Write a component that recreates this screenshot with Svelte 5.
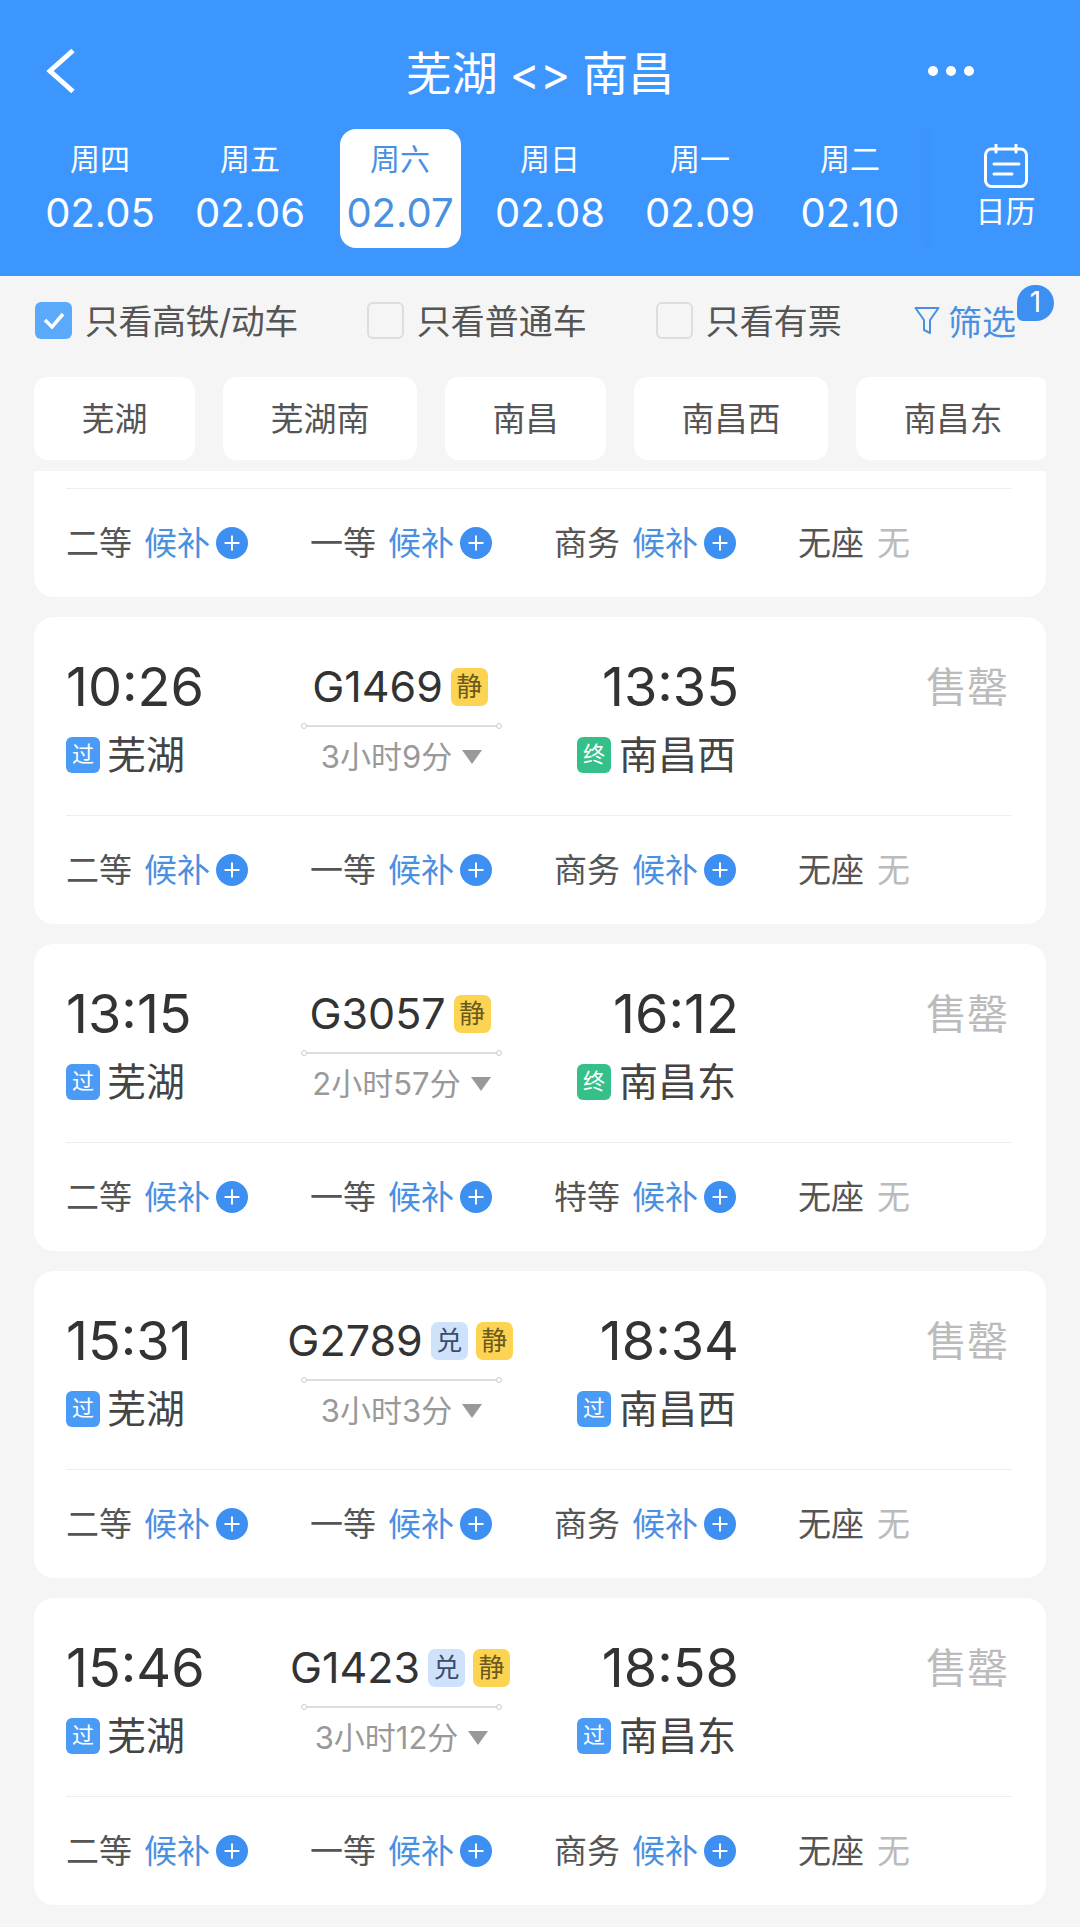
<script>
  const days = [
    { week: '周四', date: '02.05' },
    { week: '周五', date: '02.06' },
    { week: '周六', date: '02.07', active: true },
    { week: '周日', date: '02.08' },
    { week: '周一', date: '02.09' },
    { week: '周二', date: '02.10' }
  ];

  const filters = [
    { label: '只看高铁/动车', checked: true },
    { label: '只看普通车', checked: false },
    { label: '只看有票', checked: false }
  ];

  const stations = ['芜湖', '芜湖南', '南昌', '南昌西', '南昌东'];

  const standardSeats = ['二等', '一等', '商务'];

  const trains = [
    { dep: '10:26', no: 'G1469', exchange: false, dur: '3小时9分', arr: '13:35', from: '芜湖', to: '南昌西', end: true, seats: standardSeats },
    { dep: '13:15', no: 'G3057', exchange: false, dur: '2小时57分', arr: '16:12', from: '芜湖', to: '南昌东', end: true, seats: ['二等', '一等', '特等'] },
    { dep: '15:31', no: 'G2789', exchange: true, dur: '3小时3分', arr: '18:34', from: '芜湖', to: '南昌西', end: false, seats: standardSeats },
    { dep: '15:46', no: 'G1423', exchange: true, dur: '3小时12分', arr: '18:58', from: '芜湖', to: '南昌东', end: false, seats: standardSeats }
  ];
</script>

{#snippet seatRow(seats)}
  <div class="seats">
    {#each seats as seat}
      <div class="seat">
        <span class="seat-name">{seat}</span>
        <span class="wait">候补</span>
        <svg class="plus" viewBox="0 0 32 32" aria-hidden="true">
          <circle cx="16" cy="16" r="16" fill="#3d8ff2" />
          <path d="M16 8.5v15M8.5 16h15" stroke="#fff" stroke-width="2" fill="none" />
        </svg>
      </div>
    {/each}
    <div class="seat">
      <span class="seat-name">无座</span>
      <span class="none">无</span>
    </div>
  </div>
{/snippet}

<div class="page">
  <header class="header">
    <div class="title-row">
      <div class="back">
        <svg width="32" height="46" viewBox="0 0 32 46" aria-hidden="true">
          <path d="M28 2.5 5 23l23 20.500" fill="none" stroke="#fff" stroke-width="5" />
        </svg>
      </div>
      <h1 class="title">芜湖 &lt;&gt; 南昌</h1>
      <div class="more">
        <i></i><i></i><i></i>
      </div>
    </div>

    <div class="tabs">
      {#each days as day}
        <div class="tab">
          <div class="tab-box" class:active={day.active}>
            <span class="week">{day.week}</span>
            <span class="date">{day.date}</span>
          </div>
        </div>
      {/each}
      <div class="calendar">
        <svg width="44" height="44" viewBox="0 0 44 44" aria-hidden="true">
          <rect x="1.500" y="5" width="41" height="37.500" rx="6" fill="none" stroke="#fff" stroke-width="3" />
          <path d="M12 1v7M32 1v7M10 20h25M10 30h18" fill="none" stroke="#fff" stroke-width="3" stroke-linecap="round" />
        </svg>
        <span>日历</span>
      </div>
    </div>
  </header>

  <div class="filters">
    {#each filters as filter, i}
      <div class="filter">
        {#if filter.checked}
          <span class="check on">
            <svg width="26" height="22" viewBox="0 0 26 22" aria-hidden="true">
              <path d="M4 11l7 7L22 5" fill="none" stroke="#fff" stroke-width="3.500" />
            </svg>
          </span>
        {:else}
          <span class="check"></span>
        {/if}
        <span class:tight={i === 0}>{filter.label}</span>
      </div>
    {/each}
    <div class="screen">
      <svg width="26" height="29" viewBox="0 0 26 29" aria-hidden="true">
        <path d="M1.500 2h23L16 14v13l-6-3V14z" fill="none" stroke="#4a90e2" stroke-width="2" stroke-linejoin="round" />
      </svg>
      <span>筛选</span>
      <b class="count">1</b>
    </div>
  </div>

  <div class="chips">
    {#each stations as station}
      <div class="chip">{station}</div>
    {/each}
  </div>

  <div class="list">
    <section class="card partial">
      <div class="rule"></div>
      {@render seatRow(standardSeats)}
    </section>

    {#each trains as train}
      <section class="card">
        <div class="info">
          <div class="depart">
            <div class="time">{train.dep}</div>
            <div class="stop">
              <span class="tag">过</span>
              <span class="stop-name">{train.from}</span>
            </div>
          </div>

          <div class="middle">
            <div class="number">
              <span>{train.no}</span>
              {#if train.exchange}
                <span class="mark blue">兑</span>
              {/if}
              <span class="mark yellow">静</span>
            </div>
            <div class="line"></div>
            <div class="duration">
              <span class="dur-text">{train.dur}</span>
              <i class="arrow"></i>
            </div>
          </div>

          <div class="arrive">
            <div class="time">{train.arr}</div>
            <div class="stop">
              <span class="tag" class:green={train.end}>{train.end ? '终' : '过'}</span>
              <span class="stop-name">{train.to}</span>
            </div>
          </div>

          <div class="status">售罄</div>
        </div>
        {@render seatRow(train.seats)}
      </section>
    {/each}
  </div>
</div>

<style>
  :global(body) {
    margin: 0;
    background: #f5f5f5;
  }

  .page {
    width: 1080px;
    height: 1927px;
    overflow: hidden;
    background: #f5f5f5;
    font-family: Inter, "Noto Sans CJK SC", sans-serif;
    color: #555;
  }

  .header {
    height: 276px;
    background: #3d96fd;
    color: #fff;
  }

  .title-row {
    height: 129px;
    box-sizing: border-box;
    padding-top: 13px;
    display: grid;
    grid-template-columns: 1fr auto 1fr;
    align-items: center;
  }

  .back {
    padding-left: 45px;
    display: flex;
  }

  .title {
    margin: 0 0 2px;
    font-size: 46px;
    font-weight: 400;
    word-spacing: -1px;
    white-space: pre;
  }

  .more {
    display: flex;
    justify-content: flex-end;
    gap: 8px;
    padding-right: 106px;
  }

  .more i {
    width: 10px;
    height: 10px;
    border-radius: 50%;
    background: #fff;
  }

  .tabs {
    display: flex;
    height: 119px;
    padding-left: 25px;
  }

  .tab {
    width: 150px;
    display: flex;
    justify-content: center;
  }

  .tab-box {
    width: 121px;
    border-radius: 16px;
    box-sizing: border-box;
    padding-top: 11px;
    display: flex;
    flex-direction: column;
    align-items: center;
  }

  .tab-box.active {
    background: #fff;
    color: #4a90e2;
  }

  .week {
    height: 40px;
    line-height: 38px;
    font-size: 30px;
  }

  .date {
    height: 64px;
    line-height: 66px;
    font-size: 40px;
  }

  .calendar {
    margin-left: auto;
    width: 149px;
    display: flex;
    flex-direction: column;
    align-items: center;
    padding-top: 15px;
    box-sizing: border-box;
    font-size: 30px;
    box-shadow: -4px 0 6px rgba(30, 90, 190, 0.04);
    clip-path: inset(0 0 0 -12px);
  }

  .calendar span {
    margin-top: 3px;
    line-height: 40px;
  }

  .filters {
    height: 88px;
    display: flex;
    align-items: center;
    gap: 69px;
    padding-left: 35px;
    font-size: 34px;
  }

  .filter {
    display: flex;
    align-items: center;
    gap: 13px;
  }

  .filter > span:last-child {
    margin-bottom: 2px;
  }

  .tight {
    letter-spacing: -0.5px;
  }

  .check {
    width: 37px;
    height: 37px;
    box-sizing: border-box;
    border-radius: 6px;
    border: 2px solid #ddd;
    background: #f5f5f5;
    display: flex;
    align-items: center;
    justify-content: center;
  }

  .check.on {
    border: 0;
    background: #5ba9fb;
  }

  .screen {
    position: absolute;
    left: 914px;
    display: flex;
    align-items: center;
    gap: 8px;
    color: #4a90e2;
  }

  .count {
    position: absolute;
    left: 103px;
    top: -11px;
    width: 37px;
    height: 36px;
    border-radius: 18px 18px 18px 6px;
    background: #3d8ff2;
    color: #fff;
    font-size: 28px;
    font-weight: 400;
    line-height: 34px;
    text-align: center;
  }

  .chips {
    margin: 13px 34px 0;
    display: flex;
    gap: 28px;
    overflow: hidden;
  }

  .chip {
    flex: none;
    height: 83px;
    line-height: 84px;
    padding: 0 47.5px;
    border-radius: 14px;
    background: #fff;
    font-size: 33px;
    white-space: nowrap;
  }

  .list {
    margin: 11px 34px 0;
    display: flex;
    flex-direction: column;
    gap: 20px;
  }

  .card {
    height: 307px;
    background: #fff;
    border-radius: 20px;
    padding: 0 34px 0 32px;
  }

  .card.partial {
    height: 126px;
    border-radius: 0 0 20px 20px;
  }

  .rule {
    height: 18px;
    box-sizing: border-box;
    border-bottom: 1px solid #eee;
  }

  .info {
    height: 199px;
    box-sizing: border-box;
    padding-top: 30px;
    border-bottom: 1px solid #eee;
    display: flex;
  }

  .depart {
    width: 236px;
  }

  .arrive {
    width: 236px;
    display: flex;
    flex-direction: column;
    align-items: flex-end;
  }

  .time {
    height: 80px;
    line-height: 80px;
    font-size: 54px;
    color: #333;
  }

  .arrive .time {
    margin-right: -2px;
  }

  .stop {
    height: 54px;
    display: flex;
    align-items: center;
    gap: 7px;
    font-size: 39px;
    color: #444;
  }

  .arrive .stop {
    gap: 8px;
    margin-right: 1px;
  }

  .stop-name {
    margin-bottom: 4px;
  }

  .tag {
    width: 34px;
    height: 36px;
    margin-top: 2px;
    border-radius: 6px;
    background: #4a9bf5;
    color: #fff;
    font-size: 22px;
    line-height: 35px;
    text-align: center;
  }

  .tag.green {
    background: #35c08a;
  }

  .middle {
    width: 199px;
  }

  .number {
    height: 78px;
    margin-left: -3px;
    display: flex;
    align-items: center;
    justify-content: center;
    gap: 8px;
    font-size: 43px;
    color: #333;
    white-space: nowrap;
  }

  .mark {
    flex: none;
    width: 37px;
    height: 38px;
    margin-top: 2px;
    line-height: 37px;
    border-radius: 7px;
    font-size: 26px;
    text-align: center;
  }

  .mark.yellow {
    background: #fdd451;
    color: #6b5a1e;
  }

  .mark.blue {
    background: #cfe2fb;
    color: #3d4a6b;
  }

  .line {
    height: 2px;
    background: #ddd;
    position: relative;
  }

  .line::before,
  .line::after {
    content: '';
    position: absolute;
    top: -2px;
    width: 6px;
    height: 6px;
    box-sizing: border-box;
    border: 1px solid #ccc;
    border-radius: 50%;
    background: #fff;
  }

  .line::before {
    left: -1px;
  }

  .line::after {
    right: -1px;
  }

  .duration {
    height: 60px;
    display: flex;
    align-items: center;
    justify-content: center;
    gap: 10px;
    font-size: 31px;
    color: #999;
    white-space: nowrap;
  }

  .dur-text {
    margin-bottom: 5px;
  }

  .arrow {
    width: 0;
    height: 0;
    border-left: 10px solid transparent;
    border-right: 10px solid transparent;
    border-top: 14px solid #999;
  }

  .status {
    flex: 1;
    text-align: right;
    height: 80px;
    line-height: 80px;
    padding-right: 4px;
    font-size: 41px;
    color: #bbb;
  }

  .seats {
    height: 108px;
    display: grid;
    grid-template-columns: repeat(4, 244px);
    align-items: center;
    font-size: 33px;
  }

  .seat {
    display: flex;
    align-items: center;
    white-space: nowrap;
  }

  .seat span {
    margin-bottom: 4px;
  }

  .wait {
    margin-left: 12px;
    color: #4a90e2;
  }

  .plus {
    width: 32px;
    height: 32px;
    margin-left: 6px;
  }

  .none {
    margin-left: 13px;
    color: #bbb;
  }
</style>
